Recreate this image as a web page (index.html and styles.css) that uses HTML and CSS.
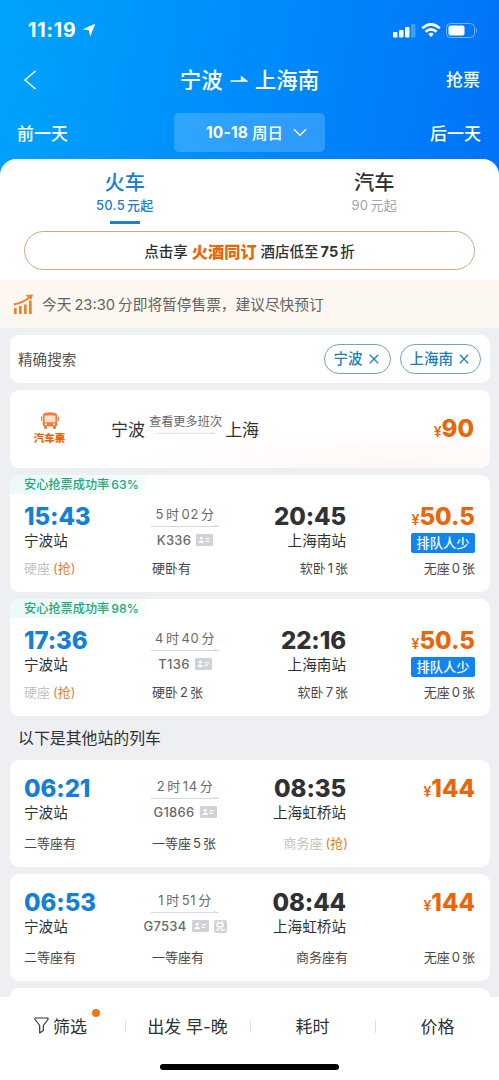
FILE: index.html
```html
<!DOCTYPE html>
<html lang="zh-CN">
<head>
<meta charset="utf-8">
<title>宁波 - 上海南</title>
<link rel="stylesheet" href="styles.css">
</head>
<body>
<svg class="defs" width="0" height="0">
  <symbol id="arrow" viewBox="0 0 70 5"><path d="M1 3.500H69" fill="none" stroke="#d8dadd" stroke-width="1"/><path d="M64 1.800 69 3.500H64Z" fill="#d8dadd"/></symbol>
  <symbol id="idcard" viewBox="0 0 17 12"><rect width="17" height="12" rx="1" fill="#cfd3d7"/><circle cx="5.300" cy="4.200" r="1.400" fill="#fff"/><path d="M2.800 9V7.800Q5.300 5.200 7.700 7.800V9ZM9.500 4.200h4.500v1.100h-4.500zM9.500 6.800h3.500v1.100H9.500z" fill="#fff"/></symbol>
  <symbol id="close" viewBox="0 0 10 10"><path d="M.8.8 9.2 9.2M9.2.8.8 9.2" fill="none" stroke="#1c80b8" stroke-width="1.3"/></symbol>
</svg>
<div class="app">
  <header class="header">
    <div class="status">
      <span class="clock">11:19</span>
      <svg class="loc" width="14" height="14" viewBox="0 0 14 14"><path d="M13.3.7.5 6.3 6.8 7.3 8.2 13.4Z" fill="#fff"/></svg>
      <span class="grow"></span>
      <svg width="86" height="17" viewBox="0 0 86 17">
        <g fill="#fff"><rect x="1" y="10" width="4.500" height="5.500" rx="1"/><rect x="7" y="8" width="4.500" height="7.500" rx="1"/><rect x="13" y="5" width="4.500" height="10.500" rx="1"/><rect x="19" y="2" width="4.500" height="13.500" rx="1" opacity=".25"/></g>
        <g fill="none" stroke="#fff" stroke-width="2.600"><path d="M30.200 6.300Q39-1.500 47.800 6.300"/><path d="M33.500 9.700Q39 4.900 44.500 9.700"/></g><path d="M36.200 12Q39 9.500 41.800 12L39 15Z" fill="#fff"/>
        <rect x="54.500" y="1.500" width="28" height="14" rx="4" fill="none" stroke="#fff" opacity=".45"/><rect x="56.500" y="3.500" width="16" height="10" rx="2" fill="#fff"/><path d="M84 6q2 2.500 0 5Z" fill="#fff" opacity=".5"/>
      </svg>
    </div>
    <div class="titlebar">
      <svg width="14" height="20" viewBox="0 0 14 20"><path d="M12.500 1 2 10 12.500 19" fill="none" stroke="#fff" stroke-width="1.500"/></svg>
      <h1 class="title">宁波<svg width="18" height="8" viewBox="0 0 18 8"><path d="M.5 5H16.500L11.500 1V5" fill="#fff" stroke="#fff" stroke-width="1.300"/></svg>上海南</h1>
      <span class="grab">抢票</span>
    </div>
    <div class="days">
      <span>前一天</span>
      <div class="date"><b>10-18</b><span>周日</span><svg width="14" height="9" viewBox="0 0 14 9"><path d="M1 1.200 7 7.300 13 1.200" fill="none" stroke="#fff" stroke-width="1.400"/></svg></div>
      <span>后一天</span>
    </div>
  </header>

  <section class="sheet">
    <div class="tabs">
      <div class="tab active"><div class="tab-name">火车</div><div class="tab-price">50.5<i></i>元起</div></div>
      <div class="tab"><div class="tab-name">汽车</div><div class="tab-price">90<i></i>元起</div></div>
    </div>
    <div class="promo"><span>点击享</span><strong>火酒同订</strong><span>酒店低至<i></i><b>75</b><i></i>折</span></div>
  </section>

  <div class="notice">
    <svg width="21" height="21" viewBox="0 0 21 21"><g fill="#e8862d"><rect x="1" y="14" width="2.700" height="6"/><rect x="6" y="12" width="2.700" height="8"/><rect x="11" y="10.500" width="2.700" height="9.500"/><rect x="16" y="6.500" width="2.700" height="13.500"/></g><path d="M.7 10.500Q10.500 8.800 17.500 2.500" fill="none" stroke="#e8862d" stroke-width="2"/><path d="M12.500 1 20 .5 18.300 6Z" fill="#e8862d"/></svg>
    <span>今天<i></i>23:30<i></i>分即将暂停售票，建议尽快预订</span>
  </div>

  <main class="list">
    <div class="card search">
      <span>精确搜索</span>
      <div class="chips">
        <span class="chip">宁波<svg width="10" height="10"><use href="#close"/></svg></span>
        <span class="chip">上海南<svg width="10" height="10"><use href="#close"/></svg></span>
      </div>
    </div>

    <div class="card bus">
      <div class="bus-logo">
        <svg width="18" height="18" viewBox="0 0 20 20"><path d="M4 1Q10-.5 16 1 18 1.500 18 4V14.500Q18 16 16.500 16V19H13.500V16H6.500V19H3.500V16Q2 16 2 14.500V4Q2 1.500 4 1Z" fill="#ee7b3e"/><rect x="4" y="4" width="12" height="7.500" rx=".8" fill="#fde2d2"/><path d="M0 5h1.300v5H0zM18.700 5H20v5h-1.300z" fill="#ee7b3e"/><circle cx="5.500" cy="13.700" r="1.100" fill="#fff"/><circle cx="14.500" cy="13.700" r="1.100" fill="#fff"/></svg>
        <b>汽车票</b>
      </div>
      <div class="bus-route">
        <span>宁波</span>
        <div class="more"><span>查看更多班次</span><svg width="60" height="5" viewBox="0 0 70 5"><use href="#arrow"/></svg></div>
        <span>上海</span>
      </div>
      <div class="price"><small>¥</small>90</div>
    </div>

    <article class="card train tagged">
      <div class="rate">安心抢票成功率<i></i>63%</div>
      <div class="main">
        <div class="from"><div class="time">15:43</div><div class="station">宁波站</div></div>
        <div class="via"><div class="dur">5<i></i>时<i></i>02<i></i>分</div><svg class="line" width="70" height="5"><use href="#arrow"/></svg><div class="no">K336<svg width="17" height="12"><use href="#idcard"/></svg></div></div>
        <div class="to"><div class="time">20:45</div><div class="station">上海南站</div></div>
        <div class="cost"><div class="price"><small>¥</small>50.5</div><span class="queue">排队人少</span></div>
      </div>
      <div class="seats"><span><s>硬座</s><em>(抢)</em></span><span>硬卧有</span><span class="r">软卧<i></i>1<i></i>张</span><span class="r">无座<i></i>0<i></i>张</span></div>
    </article>

    <article class="card train tagged">
      <div class="rate">安心抢票成功率<i></i>98%</div>
      <div class="main">
        <div class="from"><div class="time">17:36</div><div class="station">宁波站</div></div>
        <div class="via"><div class="dur">4<i></i>时<i></i>40<i></i>分</div><svg class="line" width="70" height="5"><use href="#arrow"/></svg><div class="no">T136<svg width="17" height="12"><use href="#idcard"/></svg></div></div>
        <div class="to"><div class="time">22:16</div><div class="station">上海南站</div></div>
        <div class="cost"><div class="price"><small>¥</small>50.5</div><span class="queue">排队人少</span></div>
      </div>
      <div class="seats"><span><s>硬座</s><em>(抢)</em></span><span>硬卧<i></i>2<i></i>张</span><span class="r">软卧<i></i>7<i></i>张</span><span class="r">无座<i></i>0<i></i>张</span></div>
    </article>

    <h2 class="other">以下是其他站的列车</h2>

    <article class="card train">
      <div class="main">
        <div class="from"><div class="time">06:21</div><div class="station">宁波站</div></div>
        <div class="via"><div class="dur">2<i></i>时<i></i>14<i></i>分</div><svg class="line" width="70" height="5"><use href="#arrow"/></svg><div class="no">G1866<svg width="17" height="12"><use href="#idcard"/></svg></div></div>
        <div class="to"><div class="time">08:35</div><div class="station">上海虹桥站</div></div>
        <div class="cost"><div class="price"><small>¥</small>144</div></div>
      </div>
      <div class="seats"><span>二等座有</span><span>一等座<i></i>5<i></i>张</span><span class="r"><s>商务座</s><em>(抢)</em></span></div>
    </article>

    <article class="card train">
      <div class="main">
        <div class="from"><div class="time">06:53</div><div class="station">宁波站</div></div>
        <div class="via"><div class="dur">1<i></i>时<i></i>51<i></i>分</div><svg class="line" width="70" height="5"><use href="#arrow"/></svg><div class="no">G7534<svg width="17" height="12"><use href="#idcard"/></svg><span class="swap">兑</span></div></div>
        <div class="to"><div class="time">08:44</div><div class="station">上海虹桥站</div></div>
        <div class="cost"><div class="price"><small>¥</small>144</div></div>
      </div>
      <div class="seats"><span>二等座有</span><span>一等座有</span><span class="r">商务座有</span><span class="r">无座<i></i>0<i></i>张</span></div>
    </article>
    <div class="card next"></div>
  </main>

  <footer class="footer">
    <div class="sorts">
      <div class="sort"><svg width="15" height="17" viewBox="0 0 15 17"><path d="M1 1H14V2.500L9.300 8.500V13.500L5.700 16V8.500L1 2.500Z" fill="none" stroke="#333" stroke-width="1.200" stroke-linejoin="round"/></svg><span class="filter">筛选</span></div>
      <div class="sort">出发 早-晚</div>
      <div class="sort">耗时</div>
      <div class="sort">价格</div>
    </div>
    <div class="home"></div>
  </footer>
</div>
</body>
</html>
```
FILE: styles.css
```css
* { box-sizing: border-box; }
body, h1, h2 { margin: 0; }
body { background: #eeeff3; font-family: Inter, "Noto Sans CJK SC", sans-serif; color: #303133; }
svg { display: block; flex: none; }
i { display: inline-block; width: 2px; }
.defs { position: absolute; }
.app { width: 499px; height: 1080px; display: flex; flex-direction: column; overflow: hidden; white-space: nowrap; }
.grow { flex: 1; }

.header { flex: none; height: 175px; background: linear-gradient(100deg, #00a4fc 0%, #008efb 45%, #0073f7 100%); color: #fff; }
.status { display: flex; align-items: center; height: 60px; padding: 0 21px 0 28px; }
.clock { font-size: 19.500px; font-weight: 700; letter-spacing: .8px; }
.loc { margin-left: 6px; }
.titlebar { display: grid; grid-template-columns: 70px 1fr 70px; align-items: center; height: 40px; padding: 0 19px 0 23px; }
.title { display: flex; align-items: center; justify-content: center; gap: 7px; margin-left: -4px; font-size: 21.500px; font-weight: 500; line-height: 30px; }
.grab { text-align: right; font-size: 17px; font-weight: 500; line-height: 22px; padding-bottom: 1px; }
.days { display: flex; align-items: center; justify-content: space-between; height: 39px; margin-top: 13px; padding: 0 18px 0 17px; font-size: 17px; font-weight: 500; }
.days > span { padding-bottom: 1px; }
.date { display: flex; align-items: center; justify-content: center; width: 151px; height: 39px; padding-left: 15px; border-radius: 5px; background: rgba(255,255,255,.18); font-size: 15.500px; }
.date b { letter-spacing: .2px; }
.date span { margin: 0 10px 0 4px; padding-bottom: 1px; }

.sheet { flex: none; height: 121px; margin-top: -16px; border-radius: 16px 16px 0 0; background: #fff; }
.tabs { display: grid; grid-template-columns: 1fr 1fr; height: 72px; }
.tab { display: flex; flex-direction: column; align-items: center; padding-top: 9px; }
.tab-name { font-size: 20.300px; line-height: 29px; font-weight: 500; }
.tab-price { font-size: 13px; line-height: 16px; letter-spacing: .3px; color: #a4a4a4; }
.active, .active .tab-price { color: #1b80cb; }
.active .tab-price { font-weight: 500; }
.active::after { content: ""; width: 30px; height: 3px; margin-top: 8px; background: #2380c4; }
.promo { display: flex; align-items: center; justify-content: center; gap: 4px; width: 451px; height: 39px; margin-left: 24px; border: 1px solid #cda982; border-radius: 20px; font-size: 14.500px; font-weight: 500; }
.promo strong { color: #e8670c; font-size: 16.200px; font-weight: 900; }

.notice { flex: none; display: flex; align-items: center; gap: 8px; height: 48px; padding-left: 13px; background: #fdf7f1; color: #626262; font-size: 14.700px; }
.notice span { padding-bottom: 2px; }
.notice i { width: 3px; }

.list { flex: 1; min-height: 0; overflow: hidden; padding: 7px 9px 0 10px; }
.card { border-radius: 9px; background: #fff; margin-bottom: 7px; }
.search { display: flex; align-items: center; justify-content: space-between; height: 48px; padding: 0 9px 0 8px; font-size: 14.600px; color: #555; }
.search > span { padding-bottom: 1px; }
.chips { display: flex; gap: 9px; }
.chip { display: flex; align-items: center; gap: 6px; height: 30px; padding: 0 11px 0 9px; border: 1px solid #6ea6bd; border-radius: 15px; color: #1c80b8; font-weight: 500; font-size: 14.500px; line-height: 20px; }
.bus { display: grid; grid-template-columns: 78px 1fr auto; align-items: center; height: 78px; padding-right: 16px; background: radial-gradient(ellipse 60% 50% at 80% 100%, #fff7f5 0, rgba(255,255,255,0) 100%), #fff; }
.bus-logo { display: flex; flex-direction: column; align-items: center; gap: 2px; padding-left: 1px; color: #e8670c; font-size: 10.500px; line-height: 14px; font-weight: 900; }
.bus-route { display: flex; align-items: center; padding: 0 0 2px 23px; font-size: 17px; }
.more { display: flex; flex-direction: column; align-items: center; margin: 0 3px 8px 4px; font-size: 12.200px; line-height: 17px; color: #666; }
.price { height: 28px; color: #e8670c; font-size: 24px; font-weight: 800; line-height: 28px; }
.price small { font-size: 14px; font-weight: 600; line-height: 14px; }

.train { height: 107px; padding: 15px 15px 0 14px; }
.tagged { height: 117px; padding-top: 0; }
.rate { width: 137px; height: 19px; margin-left: -14px; margin-bottom: 9px; padding-left: 14px; border-radius: 9px 0 6px 0; background: linear-gradient(90deg, #ebfaf6, #f4fffc); color: #25a57b; font-size: 12.200px; line-height: 19px; font-weight: 500; }
.main { display: grid; grid-template-columns: 93px 136px 93px 129px; height: 52px; }
.time { font-size: 24px; line-height: 27px; margin-bottom: 1px; font-weight: 800; letter-spacing: -.1px; }
.from .time { color: #157fd6; }
.station { font-size: 14.600px; line-height: 20px; }
.to, .cost { display: flex; flex-direction: column; align-items: flex-end; }
.via { display: flex; flex-direction: column; align-items: center; color: #6a6a6a; font-size: 13px; }
.dur { line-height: 17px; margin-top: 3px; letter-spacing: .6px; }
.no { display: flex; align-items: center; gap: 5px; height: 18px; margin-top: 3px; letter-spacing: .3px; font-weight: 500; }
.swap { width: 13px; height: 13px; border-radius: 2px; background: #cfd3d7; color: #fff; font-size: 10px; line-height: 13px; text-align: center; font-weight: 700; }
.queue { width: 64px; height: 20px; margin-top: 2px; border-radius: 2px; background: #1284ee; color: #fff; font-size: 13.300px; font-weight: 500; line-height: 20px; text-align: center; }
.seats { display: grid; grid-template-columns: 128px 98px 98px 127px; margin-top: 8px; font-size: 13px; line-height: 17px; color: #484848; }
.tagged .seats { margin-top: 5px; }
.r { justify-self: end; }
.seats s { text-decoration: none; color: #c3c3c3; }
.seats em { font-style: normal; color: #d98239; margin-left: 3px; }
.other { height: 37px; padding-left: 8px; font-size: 15.900px; line-height: 31px; font-weight: 400; }
.next { height: 20px; margin: 0; }

.footer { flex: none; height: 83px; background: #fff; }
.sorts { display: grid; grid-template-columns: repeat(4, 125px); height: 57px; }
.sort { display: flex; align-items: center; justify-content: center; gap: 4px; font-size: 17px; position: relative; }
.sort:first-child { padding-right: 4px; }
.sort + .sort::before { content: ""; position: absolute; left: 0; top: 24px; width: 1px; height: 12px; background: #ddd; }
.filter { position: relative; }
.filter::after { content: ""; position: absolute; right: -13px; top: -4px; width: 8px; height: 8px; border-radius: 50%; background: #ea7813; }
.home { width: 179px; height: 6px; margin: 10px 0 0 160px; border-radius: 3px; background: #000; }
```
